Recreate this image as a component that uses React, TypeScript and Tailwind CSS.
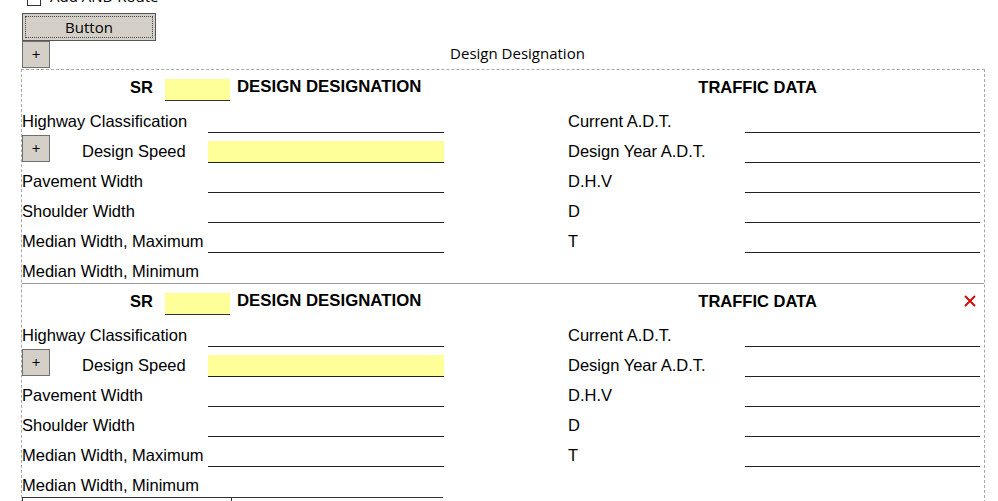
import React from "react";

const leftRows = [
  "Highway Classification",
  "Design Speed",
  "Pavement Width",
  "Shoulder Width",
  "Median Width, Maximum",
  "Median Width, Minimum",
];
const rightRows = ["Current A.D.T.", "Design Year A.D.T.", "D.H.V", "D", "T", ""];

function PlusButton() {
  return (
    <div className="w-[28px] h-[27px] bg-[#d4d0c8] border border-[#6f6f6f] flex items-center justify-center text-[15px] leading-none text-black" style={{ fontFamily: "'Open Sans', 'Noto Sans', sans-serif" }}>
      +
    </div>
  );
}

function Section({ first, showX }: { first?: boolean; showX?: boolean }) {
  return (
    <div className={first ? "" : "border-t border-[#9a9a9a]"}>
      <div className="h-[33px] flex items-start relative">
        <div className="w-[131px] shrink-0 text-right mt-[8px] font-bold text-[16.5px] leading-[18px]">SR</div>
        <div className="ml-[12px] mt-[9px] w-[65px] h-[22px] bg-[#ffff99] border-b border-[#333]" />
        <div className="ml-[7px] mt-[8px] font-bold text-[16.8px] leading-[18px] whitespace-nowrap">DESIGN DESIGNATION</div>
        <div className="ml-[277px] mt-[8px] font-bold text-[16.5px] leading-[18px] whitespace-nowrap">TRAFFIC DATA</div>
        {showX && (
          <svg className="absolute left-[942px] top-[11px]" width="12" height="12" viewBox="0 0 12 12">
            <path d="M1.5 1.5 L10.5 10.5 M10.5 1.5 L1.5 10.5" stroke="#d40000" strokeWidth="1.8" strokeLinecap="round" />
          </svg>
        )}
      </div>
      {leftRows.map((l, i) => (
        <div key={i} className={"h-[30px] flex items-end " + (i === 0 ? "mt-[-1px] h-[31px]" : "")}>
          <div className="w-[186px] shrink-0 flex items-end">
            {i === 1 ? (
              <>
                <div className="mb-[1px]"><PlusButton /></div>
                <div className="ml-[32px] pb-[3px] text-[16.5px] leading-[18px] whitespace-nowrap">{l}</div>
              </>
            ) : (
              <div className="pb-[3px] text-[16.5px] leading-[18px] whitespace-nowrap">{l}</div>
            )}
          </div>
          <div className="w-[236px] shrink-0 h-[22px]">
            {i < 5 && (
              <div className={"h-[22px] border-b border-[#222] " + (i === 1 ? "bg-[#ffff99]" : "")} />
            )}
          </div>
          <div className="w-[124px] shrink-0" />
          <div className="w-[177px] shrink-0 pb-[3px] text-[16.5px] leading-[18px] whitespace-nowrap">{rightRows[i]}</div>
          <div className="w-[235px] shrink-0 h-[22px]">
            {i < 5 && <div className="h-[22px] border-b border-[#222]" />}
          </div>
        </div>
      ))}
    </div>
  );
}

export default function App() {
  return (
    <div
      className="w-[998px] h-[501px] overflow-hidden bg-white text-black"
      style={{ fontFamily: "'Liberation Sans', Arial, sans-serif" }}
    >
      <div className="flex items-end mt-[-8px] pl-[27px] h-[14px]">
        <div className="w-[14px] h-[14px] border border-[#333] bg-white shrink-0" />
        <div className="ml-[9px] text-[15px] leading-[20px]" style={{ fontFamily: "'Open Sans', 'Noto Sans', sans-serif" }}>
          Add AND Route
        </div>
      </div>
      <div className="pl-[22px] mt-[7px]">
        <div className="w-[134px] h-[28px] bg-[#d4d0c8] border border-[#555] p-[2px]">
          <div
            className="w-full h-full border border-dotted border-[#444] flex items-center justify-center text-[15px]"
            style={{ fontFamily: "'Open Sans', 'Noto Sans', sans-serif" }}
          >
            Button
          </div>
        </div>
      </div>
      <div className="ml-[21px] w-[964px] flex items-start">
        <div className="ml-[1px]"><PlusButton /></div>
        <div
          className="flex-1 text-center text-[15px] leading-[20px] mt-[2px] whitespace-nowrap"
          style={{ fontFamily: "'Open Sans', 'Noto Sans', sans-serif" }}
        >
          Design Designation
        </div>
      </div>
      <div className="ml-[21px] w-[964px] border border-dashed border-[#a8a8a8] mt-[1px]">
        <Section first />
        <Section showX />
        <div className="flex">
          <div className="w-[421px] h-[10px] border-t border-l border-[#333] flex">
            <div className="w-[209px] border-r border-[#333]" />
          </div>
        </div>
      </div>
    </div>
  );
}
